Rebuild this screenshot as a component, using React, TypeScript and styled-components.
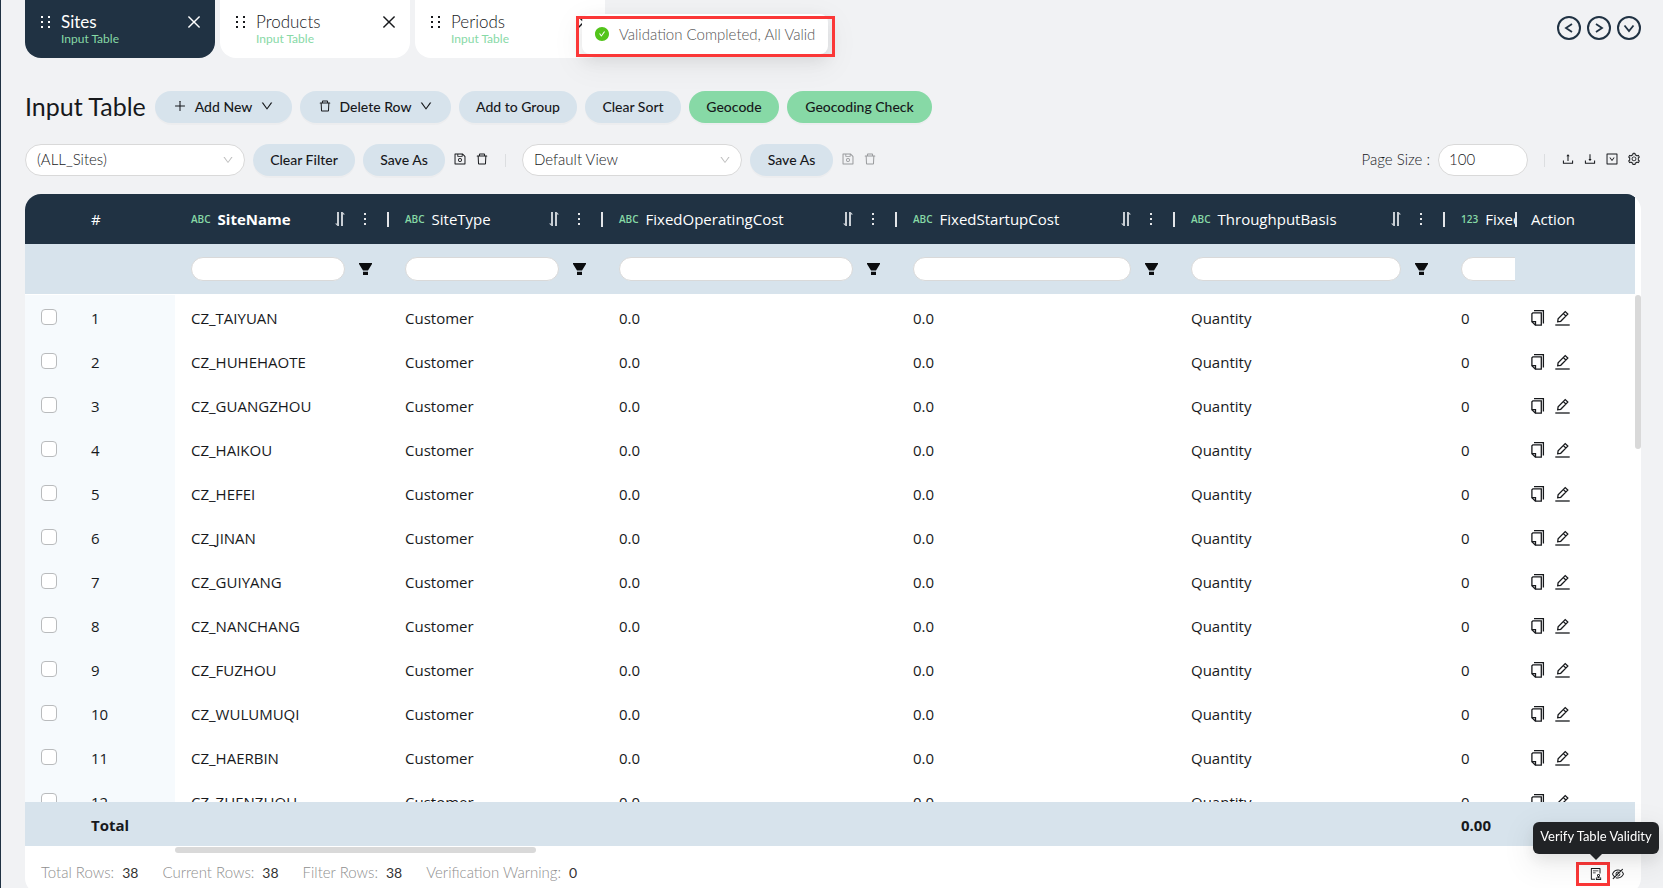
import React from "react";
import styled, { createGlobalStyle, css } from "styled-components";
import {
  AiFillCheckCircle,
  AiOutlineAudit,
  AiOutlineClose,
  AiOutlineDelete,
  AiOutlineDown,
  AiOutlineDownload,
  AiOutlineDownSquare,
  AiOutlineEyeInvisible,
  AiOutlinePlus,
  AiOutlineSave,
  AiOutlineSetting,
  AiOutlineUpload,
} from "react-icons/ai";

const color = {
  page: "#f1f2f4",
  navy: "#203243",
  blue: "#d7e3ec",
  green: "#87d9a6",
  pinned: "#f6fafd",
  ink: "#17191c",
  line: "#d9d9d9",
  mark: "#fb3737",
};

const uiFont = `Lato, "Open Sans", sans-serif`;
const dataFont = `"Open Sans", "Noto Sans", sans-serif`;

const GlobalStyle = createGlobalStyle`
  *, *::before, *::after { box-sizing: border-box; }
  body {
    margin: 0;
    overflow: hidden;
    background: ${color.page};
    color: ${color.ink};
    font-family: ${uiFont};
    font-size: 14px;
  }
  button, input, select { font: inherit; color: inherit; }
  svg { display: block; flex: none; }
`;

const Page = styled.div`
  position: relative;
  display: flex;
  flex-direction: column;
  height: calc(100vh + 6px);
  padding: 0 22px 0 24px;
  border-left: 1px solid ${color.navy};
`;

/* ---------- tabs ---------- */

const TopBar = styled.header`
  display: flex;
  justify-content: space-between;
  align-items: flex-start;
`;

const Tabs = styled.nav`
  display: flex;
  gap: 5px;
`;

const Tab = styled.div<{ $active?: boolean }>`
  display: flex;
  align-items: flex-start;
  width: 190px;
  height: 58px;
  padding: 12px 12px 0 16px;
  border-radius: 0 0 16px 16px;
  background: ${(p) => (p.$active ? color.navy : "#fff")};
  color: ${(p) => (p.$active ? "#fff" : color.ink)};
`;

const Grip = styled.svg`
  margin: 4px 11px 0 0;
`;

const TabLink = styled.a<{ $active?: boolean }>`
  flex: 1;
  display: flex;
  flex-direction: column;
  color: inherit;
  text-decoration: none;
  font-size: 17px;
  line-height: 20px;
  font-weight: ${(p) => (p.$active ? 400 : 300)};

  small {
    font-size: 12px;
    line-height: 14px;
    color: ${color.green};
    font-weight: 400;
  }
`;

const IconButton = styled.button<{ $muted?: boolean; $size?: number }>`
  display: grid;
  place-items: center;
  padding: 0;
  border: 0;
  background: none;
  cursor: pointer;
  font-size: ${(p) => p.$size ?? 14}px;
  opacity: ${(p) => (p.$muted ? 0.4 : 1)};
`;

const CloseButton = styled(IconButton)`
  margin-top: 1px;
`;

const NavButtons = styled.div`
  display: flex;
  gap: 6px;
  padding-top: 16px;
`;

const RoundButton = styled.button`
  display: grid;
  place-items: center;
  width: 24px;
  height: 24px;
  padding: 0;
  border: 2px solid ${color.navy};
  border-radius: 50%;
  background: none;
  color: ${color.navy};
`;

/* ---------- toolbars ---------- */

const Toolbar = styled.div<{ $top: number }>`
  display: flex;
  align-items: center;
  gap: 8px;
  height: 32px;
  margin-top: ${(p) => p.$top}px;
`;

const Title = styled.h1`
  margin: 0;
  width: 122px;
  padding-bottom: 2px;
  font-size: 25px;
  line-height: 30px;
  font-weight: 400;
  white-space: nowrap;
`;

const Pill = styled.button<{ $width: number; $tone?: "green" }>`
  display: flex;
  align-items: center;
  justify-content: center;
  gap: 8px;
  width: ${(p) => p.$width}px;
  height: 32px;
  padding: 0 0 2px;
  border: 0;
  border-radius: 16px;
  background: ${(p) => (p.$tone === "green" ? color.green : color.blue)};
  box-shadow: 0 2px 0 rgba(0, 0, 0, 0.02);
  font-size: 14px;
  font-weight: 500;
  white-space: nowrap;
`;

const field = css`
  height: 32px;
  border: 1px solid ${color.line};
  border-radius: 16px;
  background: #fff;
  font-size: 15px;
  font-weight: 300;
  outline: 0;
`;

const SelectBox = styled.div`
  position: relative;
  width: 220px;

  svg {
    position: absolute;
    right: 11px;
    top: 10px;
    font-size: 12px;
    color: #bfbfbf;
    pointer-events: none;
  }
`;

const Select = styled.select`
  ${field}
  width: 100%;
  padding: 0 32px 2px 11px;
  appearance: none;
`;

const PageSizeInput = styled.input`
  ${field}
  width: 90px;
  padding: 0 10px 2px;
`;

const Label = styled.label`
  margin-left: auto;
  padding-bottom: 2px;
  font-size: 15px;
  font-weight: 300;
`;

const ToolGroup = styled.div`
  display: flex;
  gap: 8px;
  padding-bottom: 2px;
`;

const Divider = styled.span`
  width: 1px;
  height: 13px;
  margin: 0 8px;
  background: #dcdee0;
`;

/* ---------- table ---------- */

const Card = styled.main`
  flex: 1;
  min-height: 0;
  display: flex;
  flex-direction: column;
  margin-top: 18px;
  border-radius: 16px;
  overflow: hidden;
  background: #fff;
`;

const GridArea = styled.div`
  flex: 1;
  min-height: 0;
  display: flex;
`;

const Scroller = styled.div`
  flex: 1;
  min-width: 0;
  overflow: hidden;
`;

const VerticalTrack = styled.div`
  width: 6px;
  padding-top: 101px;
`;

const HorizontalTrack = styled.div`
  height: 8px;
  padding: 1px 0 1px 150px;
`;

const Thumb = styled.div<{ $w: number; $h: number }>`
  width: ${(p) => p.$w}px;
  height: ${(p) => p.$h}px;
  border-radius: 3px;
  background: ${color.line};
`;

const Table = styled.table`
  width: 1800px;
  table-layout: fixed;
  border-collapse: separate;
  border-spacing: 0;
  font-family: ${dataFont};
  font-size: 15px;

  th, td {
    padding: 0 0 0 16px;
    text-align: left;
    font-weight: 400;
    white-space: nowrap;
    overflow: hidden;
  }
  thead { position: sticky; top: 0; z-index: 2; }
  tfoot { position: sticky; bottom: 0; z-index: 2; }
  tbody td + td, tfoot td { padding-top: 2px; }
`;

type Pin = "check" | "index" | "action";

const pinned = css<{ $pin?: Pin }>`
  ${(p) => p.$pin && "position: sticky; z-index: 1;"}
  ${(p) => p.$pin === "check" && "left: 0;"}
  ${(p) => p.$pin === "index" && "left: 50px;"}
  ${(p) => p.$pin === "action" && "right: 0;"}
`;

const HeadCell = styled.th<{ $pin?: Pin }>`
  ${pinned}
  height: 50px;
  background: ${color.navy};
  color: #fff;
`;

const FilterCell = styled.td<{ $pin?: Pin }>`
  ${pinned}
  height: 51px;
  background: ${color.blue};
  border-bottom: 1px solid #fff;
`;

const BodyCell = styled.td<{ $pin?: Pin }>`
  ${pinned}
  height: 44px;
  background: ${(p) => (p.$pin === "check" || p.$pin === "index" ? color.pinned : "#fff")};
`;

const FootCell = styled.td<{ $pin?: Pin }>`
  ${pinned}
  height: 44px;
  background: ${color.blue};
  && { font-weight: 700; }
`;

const HeadContent = styled.div<{ $bold?: boolean }>`
  display: flex;
  align-items: center;
  gap: 7px;
  font-weight: ${(p) => (p.$bold ? 700 : 400)};
`;

const TypeTag = styled.span`
  color: ${color.green};
  font-size: 10px;
  font-weight: 600;
`;

const HeadTools = styled.div`
  display: flex;
  align-items: center;
  margin-left: auto;
  gap: 19px;
`;

const Separator = styled.span`
  width: 2px;
  height: 15px;
  margin-left: 2px;
  background: #e3e5e8;
`;

const ActionHead = styled.div`
  display: flex;
  align-items: center;
  margin-left: -16px;
  gap: 14px;

  &::before {
    content: "";
    width: 2px;
    height: 15px;
    background: #e3e5e8;
  }
`;

const FilterContent = styled.div`
  display: flex;
  align-items: center;
  gap: 14px;
  padding-right: 17px;
`;

const FilterInput = styled.input`
  flex: 1;
  min-width: 0;
  height: 24px;
  padding: 0 11px;
  border: 1px solid ${color.line};
  border-radius: 12px;
  background: #fff;
  outline: 0;
`;

const Checkbox = styled.input`
  display: block;
  appearance: none;
  width: 16px;
  height: 16px;
  margin: 0;
  border: 1px solid #b9bbbd;
  border-radius: 4px;
  background: #fff;
`;

const Actions = styled.div`
  display: flex;
  align-items: center;
  gap: 10px;
`;

/* ---------- status bar ---------- */

const StatusBar = styled.footer`
  display: flex;
  align-items: center;
  gap: 24px;
  height: 40px;
  padding: 0 16px;
  font-size: 15px;
  font-weight: 300;
`;

const Stat = styled.span`
  display: flex;
  align-items: baseline;
  gap: 8px;
  padding-bottom: 4px;
  color: #8f8f8f;

  b {
    color: #333;
    font-size: 14px;
    font-weight: 400;
  }
`;

const StatusTools = styled.div`
  display: flex;
  align-items: center;
  gap: 1px;
  margin-left: auto;
`;

const Marked = styled.div`
  display: flex;
  align-items: center;
  justify-content: flex-end;
  width: 34px;
  height: 24px;
  padding-right: 4px;
  border: 3px solid ${color.mark};
`;

/* ---------- overlays ---------- */

const Message = styled.div`
  position: absolute;
  z-index: 5;
  left: 581px;
  top: 14px;
  display: flex;
  align-items: center;
  gap: 9px;
  width: 246px;
  height: 40px;
  padding: 0 12px;
  border-radius: 8px;
  background: #fff;
  box-shadow: 0 6px 16px rgba(0, 0, 0, 0.08), 0 9px 28px 8px rgba(0, 0, 0, 0.04);
  color: #555;
  font-size: 15px;
  line-height: 18px;
  font-weight: 300;
  white-space: nowrap;

  svg { color: #52c41a; font-size: 16px; }

  &::after {
    content: "";
    position: absolute;
    inset: 2px -7px -3px -6px;
    border: 3px solid ${color.mark};
  }
`;

const Tooltip = styled.div`
  position: absolute;
  z-index: 5;
  right: 4px;
  bottom: 40px;
  width: 126px;
  height: 32px;
  border-radius: 6px;
  background: #212326;
  color: #fff;
  font-size: 13px;
  line-height: 28px;
  text-align: center;
  white-space: nowrap;
  box-shadow: 0 6px 16px rgba(0, 0, 0, 0.08), 0 9px 28px 8px rgba(0, 0, 0, 0.05);

  &::after {
    content: "";
    position: absolute;
    left: 57px;
    top: 32px;
    border: 6px solid transparent;
    border-top-color: #212326;
    border-bottom: 0;
  }
`;

/* ---------- drawings ---------- */

const GripIcon = () => (
  <Grip width="9" height="12" fill="currentColor" aria-hidden>
    {[0, 5, 10].map((y) => (
      <React.Fragment key={y}>
        <rect x="0" y={y} width="2" height="2" />
        <rect x="7" y={y} width="2" height="2" />
      </React.Fragment>
    ))}
  </Grip>
);

const Chevron = ({ d }: { d: string }) => (
  <svg width="20" height="20" fill="none" stroke="currentColor" strokeWidth="1.8" aria-hidden>
    <path d={d} />
  </svg>
);

const SortIcon = () => (
  <svg width="10" height="14" fill="#c9cfd5" aria-hidden>
    <path d="M2 0h2v14H2.600L0 11.500h2zM6 0h1.600L10 2.500H8V14H6z" />
  </svg>
);

const MoreIcon = () => (
  <svg width="2" height="14" fill="#e3e5e8" aria-hidden>
    <rect y="1" width="2" height="2" />
    <rect y="6" width="2" height="2" />
    <rect y="11" width="2" height="2" />
  </svg>
);

const FunnelIcon = () => (
  <svg width="13" height="12" fill="#0b0d0f" aria-hidden>
    <path d="M0 0h13v1L9 7.500H4L0 1zM4 8.700h5V12H4z" />
  </svg>
);

const CopyIcon = () => (
  <svg width="14" height="16" viewBox="0 0 14 16" fill="none" stroke="currentColor" strokeWidth="1.3" aria-hidden>
    <path d="M3 .7h9.400V13.500" />
    <path d="M1.900 2.800h8.400v12.400H4.400L.9 11.800V3.800z" />
    <path d="M.9 11.600h3.600v3.600" />
  </svg>
);

const EditIcon = () => (
  <svg width="15" height="16" viewBox="0 0 15 16" fill="none" stroke="currentColor" strokeWidth="1.3" aria-hidden>
    <path d="M2.700 11.800l.4-3L10.200 1.600l2.600 2.500-7.100 7.200zM8.400 3.600l2.500 2.400" />
    <path d="M.3 15h14.400" />
  </svg>
);

/* ---------- content ---------- */

const tabs = ["Sites", "Products", "Periods"];

const columns = [
  { name: "SiteName", type: "ABC", width: 214, bold: true },
  { name: "SiteType", type: "ABC", width: 214 },
  { name: "FixedOperatingCost", type: "ABC", width: 294 },
  { name: "FixedStartupCost", type: "ABC", width: 278 },
  { name: "ThroughputBasis", type: "ABC", width: 270 },
  { name: "Fixed", type: "123", width: 260 },
];

const sites = [
  "CZ_TAIYUAN", "CZ_HUHEHAOTE", "CZ_GUANGZHOU", "CZ_HAIKOU", "CZ_HEFEI", "CZ_JINAN",
  "CZ_GUIYANG", "CZ_NANCHANG", "CZ_FUZHOU", "CZ_WULUMUQI", "CZ_HAERBIN", "CZ_ZHENZHOU",
];

const stats: [string, number][] = [
  ["Total Rows:", 38],
  ["Current Rows:", 38],
  ["Filter Rows:", 38],
  ["Verification Warning:", 0],
];

export default function App() {
  return (
    <Page>
      <GlobalStyle />
      <TopBar>
        <Tabs>
          {tabs.map((name, i) => (
            <Tab key={name} $active={i === 0}>
              <GripIcon />
              <TabLink href="#" $active={i === 0}>
                {name}
                <small>Input Table</small>
              </TabLink>
              <CloseButton $size={18} aria-label={`Close ${name}`}>
                <AiOutlineClose />
              </CloseButton>
            </Tab>
          ))}
        </Tabs>
        <NavButtons>
          <RoundButton aria-label="Previous"><Chevron d="M13 6L7 10l6 4" /></RoundButton>
          <RoundButton aria-label="Next"><Chevron d="M7 6l6 4-6 4" /></RoundButton>
          <RoundButton aria-label="More tabs"><Chevron d="M5.500 7.500L10 13l4.500-5.500" /></RoundButton>
        </NavButtons>
      </TopBar>

      <Toolbar $top={33}>
        <Title>Input Table</Title>
        <Pill $width={137}><AiOutlinePlus size={14} />Add New<AiOutlineDown size={14} /></Pill>
        <Pill $width={151}><AiOutlineDelete size={14} />Delete Row<AiOutlineDown size={14} /></Pill>
        <Pill $width={118}>Add to Group</Pill>
        <Pill $width={96}>Clear Sort</Pill>
        <Pill $width={90} $tone="green">Geocode</Pill>
        <Pill $width={145} $tone="green">Geocoding Check</Pill>
      </Toolbar>

      <Toolbar $top={21}>
        <SelectBox>
          <Select aria-label="Filter"><option>(ALL_Sites)</option></Select>
          <AiOutlineDown />
        </SelectBox>
        <Pill $width={102}>Clear Filter</Pill>
        <Pill $width={82}>Save As</Pill>
        <ToolGroup>
          <IconButton aria-label="Save filter"><AiOutlineSave /></IconButton>
          <IconButton aria-label="Delete filter"><AiOutlineDelete /></IconButton>
        </ToolGroup>
        <Divider />
        <SelectBox>
          <Select aria-label="View"><option>Default View</option></Select>
          <AiOutlineDown />
        </SelectBox>
        <Pill $width={83}>Save As</Pill>
        <ToolGroup>
          <IconButton $muted aria-label="Save view"><AiOutlineSave /></IconButton>
          <IconButton $muted aria-label="Delete view"><AiOutlineDelete /></IconButton>
        </ToolGroup>
        <Label htmlFor="page-size">Page Size :</Label>
        <PageSizeInput id="page-size" defaultValue="100" />
        <Divider />
        <ToolGroup>
          <IconButton aria-label="Upload"><AiOutlineUpload /></IconButton>
          <IconButton aria-label="Download"><AiOutlineDownload /></IconButton>
          <IconButton aria-label="Options"><AiOutlineDownSquare /></IconButton>
          <IconButton aria-label="Settings"><AiOutlineSetting /></IconButton>
        </ToolGroup>
      </Toolbar>

      <Card>
        <GridArea>
          <Scroller>
            <Table>
              <colgroup>
                <col width={50} />
                <col width={100} />
                {columns.map((c) => <col key={c.name} width={c.width} />)}
                <col width={120} />
              </colgroup>
              <thead>
                <tr>
                  <HeadCell $pin="check" />
                  <HeadCell $pin="index">#</HeadCell>
                  {columns.map((c) => (
                    <HeadCell key={c.name}>
                      <HeadContent $bold={c.bold}>
                        <TypeTag>{c.type}</TypeTag>
                        {c.name}
                        <HeadTools>
                          <SortIcon />
                          <MoreIcon />
                          <Separator />
                        </HeadTools>
                      </HeadContent>
                    </HeadCell>
                  ))}
                  <HeadCell $pin="action"><ActionHead>Action</ActionHead></HeadCell>
                </tr>
                <tr>
                  <FilterCell $pin="check" />
                  <FilterCell $pin="index" />
                  {columns.map((c) => (
                    <FilterCell key={c.name}>
                      <FilterContent>
                        <FilterInput aria-label={`Filter ${c.name}`} />
                        <IconButton aria-label={`Filter options ${c.name}`}><FunnelIcon /></IconButton>
                      </FilterContent>
                    </FilterCell>
                  ))}
                  <FilterCell $pin="action" />
                </tr>
              </thead>
              <tbody>
                {sites.map((site, i) => (
                  <tr key={site}>
                    <BodyCell $pin="check"><Checkbox type="checkbox" aria-label={`Select ${site}`} /></BodyCell>
                    <BodyCell $pin="index">{i + 1}</BodyCell>
                    <BodyCell>{site}</BodyCell>
                    <BodyCell>Customer</BodyCell>
                    <BodyCell>0.0</BodyCell>
                    <BodyCell>0.0</BodyCell>
                    <BodyCell>Quantity</BodyCell>
                    <BodyCell>0</BodyCell>
                    <BodyCell $pin="action">
                      <Actions>
                        <IconButton aria-label={`Copy ${site}`}><CopyIcon /></IconButton>
                        <IconButton aria-label={`Edit ${site}`}><EditIcon /></IconButton>
                      </Actions>
                    </BodyCell>
                  </tr>
                ))}
              </tbody>
              <tfoot>
                <tr>
                  <FootCell $pin="check" />
                  <FootCell $pin="index">Total</FootCell>
                  <FootCell colSpan={5} />
                  <FootCell>0.00</FootCell>
                  <FootCell $pin="action" />
                </tr>
              </tfoot>
            </Table>
          </Scroller>
          <VerticalTrack><Thumb $w={6} $h={154} /></VerticalTrack>
        </GridArea>
        <HorizontalTrack><Thumb $w={361} $h={6} /></HorizontalTrack>
        <StatusBar>
          {stats.map(([label, value]) => (
            <Stat key={label}>{label}<b>{value}</b></Stat>
          ))}
          <StatusTools>
            <Marked>
              <IconButton aria-label="Verify Table Validity"><AiOutlineAudit /></IconButton>
            </Marked>
            <IconButton aria-label="Hide"><AiOutlineEyeInvisible /></IconButton>
          </StatusTools>
        </StatusBar>
      </Card>

      <Message role="status"><AiFillCheckCircle />Validation Completed, All Valid</Message>
      <Tooltip role="tooltip">Verify Table Validity</Tooltip>
    </Page>
  );
}
